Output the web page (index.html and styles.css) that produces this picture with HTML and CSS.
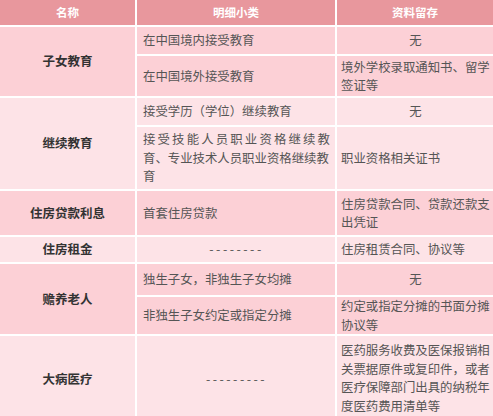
FILE: index.html
```html
<!DOCTYPE html>
<html lang="zh-CN">
<head>
<meta charset="utf-8">
<link rel="stylesheet" href="styles.css">
</head>
<body>
<div class="table">
  <div class="cell head c1">名称</div>
  <div class="cell head c2">明细小类</div>
  <div class="cell head c3">资料留存</div>

  <div class="cell name dark r1">子女教育</div>
  <div class="cell sub dark">在中国境内接受教育</div>
  <div class="cell doc dark center">无</div>
  <div class="cell sub dark">在中国境外接受教育</div>
  <div class="cell doc dark">境外学校录取通知书、留学签证等</div>

  <div class="cell name light r2">继续教育</div>
  <div class="cell sub light">接受学历（学位）继续教育</div>
  <div class="cell doc light center">无</div>
  <div class="cell sub light"><span class="just">接受技能人员职业资格继续教</span><span class="line">育、专业技术人员职业资格继续教</span><span class="line">育</span></div>
  <div class="cell doc light">职业资格相关证书</div>

  <div class="cell name dark r3">住房贷款利息</div>
  <div class="cell sub dark r3">首套住房贷款</div>
  <div class="cell doc dark r3">住房贷款合同、贷款还款支出凭证</div>

  <div class="cell name light r4">住房租金</div>
  <div class="cell sub light center dash r4">--------</div>
  <div class="cell doc light r4">住房租赁合同、协议等</div>

  <div class="cell name dark r5">赡养老人</div>
  <div class="cell sub dark">独生子女，非独生子女均摊</div>
  <div class="cell doc dark center">无</div>
  <div class="cell sub dark">非独生子女约定或指定分摊</div>
  <div class="cell doc dark">约定或指定分摊的书面分摊协议等</div>

  <div class="cell name light r6">大病医疗</div>
  <div class="cell sub light center dash r6">---------</div>
  <div class="cell doc light r6">医药服务收费及医保报销相关票据原件或复印件，或者医疗保障部门出具的纳税年度医药费用清单等</div>
</div>
</body>
</html>
```
FILE: styles.css
```css
html, body {
  margin: 0;
  padding: 0;
  background: #ffffff;
  overflow: hidden;
}
body {
  width: 493px;
  height: 416px;
  font-family: "Noto Sans CJK SC", "Noto Sans", sans-serif;
}
.table {
  display: grid;
  grid-template-columns: 135px 198px 156px;
  grid-template-rows: 25px 27px 40px 27px 62px 44px 25px 31px 37px 86px;
  column-gap: 2px;
  row-gap: 2px;
  width: 493px;
  background: #ffffff;
}
.cell {
  display: flex;
  align-items: center;
  font-size: 12.4px;
  line-height: 18.5px;
  color: #555555;
  box-sizing: border-box;
}
.head {
  background: #e8979d;
  color: #ffffff;
  font-weight: bold;
  font-size: 11.5px;
  justify-content: center;
}
.dark { background: #fcd0d6; }
.light { background: #fde3e7; }
.name {
  justify-content: center;
  font-weight: bold;
  font-size: 12.5px;
  color: #333333;
}
.r1 { grid-row: 2 / span 2; }
.r2 { grid-row: 4 / span 2; }
.r3 { grid-row: 6; }
.r4 { grid-row: 7; }
.r5 { grid-row: 8 / span 2; }
.r6 { grid-row: 10; }
.name { grid-column: 1; }
.sub {
  grid-column: 2;
  padding: 0 5px 0 6px;
  flex-direction: column;
  align-items: flex-start;
  justify-content: center;
}
.doc {
  grid-column: 3;
  padding: 0 3px 0 4px;
}
.sub.center { align-items: center; }
.doc.center { justify-content: center; }
.dash { letter-spacing: 2.5px; }
.just {
  display: block;
  width: 100%;
  text-align: justify;
  text-align-last: justify;
}
.line { display: block; }
.r6.doc { align-items: flex-start; padding-top: 5px; }
```
